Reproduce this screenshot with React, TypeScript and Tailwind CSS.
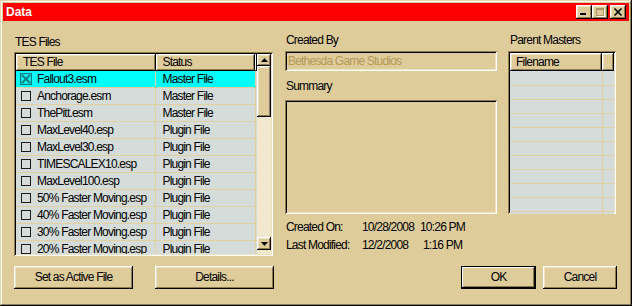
import React from 'react';

const files: { name: string; status: string; checked?: boolean }[] = [
  { name: 'Fallout3.esm', status: 'Master File', checked: true },
  { name: 'Anchorage.esm', status: 'Master File' },
  { name: 'ThePitt.esm', status: 'Master File' },
  { name: 'MaxLevel40.esp', status: 'Plugin File' },
  { name: 'MaxLevel30.esp', status: 'Plugin File' },
  { name: 'TIMESCALEX10.esp', status: 'Plugin File' },
  { name: 'MaxLevel100.esp', status: 'Plugin File' },
  { name: '50% Faster Moving.esp', status: 'Plugin File' },
  { name: '40% Faster Moving.esp', status: 'Plugin File' },
  { name: '30% Faster Moving.esp', status: 'Plugin File' },
  { name: '20% Faster Moving.esp', status: 'Plugin File' },
];

const raised =
  'shadow-[inset_-1px_-1px_0_#000,inset_1px_1px_0_#fff,inset_-2px_-2px_0_#8e7c4e,inset_2px_2px_0_#efe2c0]';
const sunken =
  'shadow-[inset_1px_1px_0_#8e7c4e,inset_-1px_-1px_0_#fff,inset_2px_2px_0_#000,inset_-2px_-2px_0_#efe2c0]';

function CheckBox({ checked }: { checked?: boolean }) {
  if (checked) {
    return (
      <svg width="12" height="12" viewBox="0 0 12 12" className="shrink-0">
        <rect x="0.5" y="0.5" width="11" height="11" fill="none" stroke="#127e7e" strokeWidth="1.5" />
        <path d="M2 2L10 10M10 2L2 10" stroke="#127e7e" strokeWidth="2" />
      </svg>
    );
  }
  return <span className="mx-[1px] block h-[10px] w-[10px] shrink-0 border border-[#1c1c1c]" />;
}

function Button({ label, wide, isDefault }: { label: string; wide: string; isDefault?: boolean }) {
  return (
    <div
      className={`${wide} flex h-[23px] items-center justify-center bg-[#dfcc9b] text-black ${
        isDefault
          ? 'border border-black shadow-[inset_-1px_-1px_0_#000,inset_1px_1px_0_#fff,inset_-2px_-2px_0_#8e7c4e]'
          : raised
      }`}
    >
      {label}
    </div>
  );
}

export default function App() {
  return (
    <div
      className="flex h-[306px] w-[632px] flex-col bg-[#dfcc9b] p-[3px] text-[12px] leading-[13px] tracking-[-0.8px] text-black shadow-[inset_-1px_-1px_0_#000,inset_1px_1px_0_#e6d6ac,inset_-2px_-2px_0_#8e7c4e,inset_2px_2px_0_#fff]"
      style={{ fontFamily: "'Liberation Sans', Arial, sans-serif" }}
    >
      {/* title bar */}
      <div className="flex h-[18px] items-center bg-[#ff0000] pr-[3px] pl-[3px]">
        <span className="text-[12px] font-bold tracking-normal text-white">Data</span>
        <div className="ml-auto flex items-center">
          <div className={`relative h-[14px] w-[16px] bg-[#dfcc9b] ${raised}`}>
            <span className="absolute top-[8px] left-[4px] h-[2px] w-[6px] bg-black" />
          </div>
          <div className={`relative h-[14px] w-[16px] bg-[#dfcc9b] ${raised}`}>
            <span className="absolute top-[3px] left-[4px] h-[8px] w-[8px] border border-t-2 border-[#a8956a] shadow-[1px_1px_0_#fff]" />
          </div>
          <div className={`relative ml-[2px] h-[14px] w-[16px] bg-[#dfcc9b] ${raised}`}>
            <svg width="16" height="14" viewBox="0 0 16 14" className="absolute top-0 left-0">
              <path d="M4.5 3.5L11.5 10.5M11.5 3.5L4.5 10.5" stroke="#000" strokeWidth="1.6" />
            </svg>
          </div>
        </div>
      </div>

      {/* body */}
      <div className="flex flex-1 flex-col pr-[12px] pl-[11px]">
        <div className="flex pt-[13px]">
          {/* TES Files */}
          <div className="flex w-[259px] flex-col pt-[2px]">
            <div className="pl-[1px]">TES Files</div>
            <div className={`mt-[3px] flex h-[204px] bg-[#dfcc9b] p-[2px] ${sunken}`}>
              <div className="w-[242px] overflow-hidden">
                <div className="flex h-[17px] bg-[#dfcc9b]">
                  <div className={`flex w-[141px] items-center pl-[7px] ${raised}`}>TES File</div>
                  <div className={`flex w-[99px] items-center pl-[6px] ${raised}`}>Status</div>
                  <div className={`w-[2px] ${raised}`} />
                </div>
                {files.map((f) => (
                  <div key={f.name} className="flex h-[17px] border-b border-[#e3d0a0]">
                    <div
                      className={`flex w-[141px] items-center border-r border-[#e3d0a0] pl-[4px] ${
                        f.checked ? 'bg-[#00ffff]' : 'bg-[#d5dcda]'
                      }`}
                    >
                      <CheckBox checked={f.checked} />
                      <span className="ml-[5px] whitespace-nowrap">{f.name}</span>
                    </div>
                    <div
                      className={`flex w-[99px] items-center pl-[6px] ${f.checked ? 'bg-[#00ffff]' : 'bg-[#d5dcda]'}`}
                    >
                      {f.status}
                    </div>
                    <div className="w-[2px] border-l border-[#e3d0a0] bg-[#d5dcda]" />
                  </div>
                ))}
              </div>
              <div className="flex w-[14px] flex-col bg-[#f2e8cf] pb-[4px]">
                <div className={`flex h-[12px] items-center justify-center bg-[#dfcc9b] ${raised}`}>
                  <svg width="7" height="4" viewBox="0 0 7 4">
                    <path d="M3.5 0L7 4H0Z" fill="#000" />
                  </svg>
                </div>
                <div className={`h-[51px] bg-[#dfcc9b] ${raised}`} />
                <div className="flex-1" />
                <div className={`flex h-[13px] items-center justify-center bg-[#dfcc9b] ${raised}`}>
                  <svg width="7" height="4" viewBox="0 0 7 4">
                    <path d="M0 0H7L3.5 4Z" fill="#000" />
                  </svg>
                </div>
              </div>
            </div>
          </div>

          {/* middle column */}
          <div className="ml-[12px] flex w-[212px] flex-col">
            <div className="pl-[1px]">Created By</div>
            <div className={`mt-[4px] flex h-[20px] items-center pl-[3px] text-[#b39858] ${sunken}`}>
              Bethesda Game Studios
            </div>
            <div className="mt-[9px] pl-[1px]">Summary</div>
            <div className={`mt-[7px] h-[114px] ${sunken}`} />
            <div className="mt-[7px] flex pl-[1px] whitespace-nowrap">
              <span className="w-[76px]">Created On:</span>
              <span className="w-[58px]">10/28/2008</span>
              <span>10:26 PM</span>
            </div>
            <div className="mt-[5px] flex pl-[1px] whitespace-nowrap">
              <span className="w-[76px]">Last Modified:</span>
              <span className="w-[58px]">12/2/2008</span>
              <span className="ml-[3px]">1:16 PM</span>
            </div>
          </div>

          {/* parent masters */}
          <div className="ml-[11px] flex w-[108px] flex-col">
            <div className="pl-[2px]">Parent Masters</div>
            <div className={`mt-[4px] h-[163px] overflow-hidden p-[2px] ${sunken}`}>
              <div className="flex h-[18px] bg-[#dfcc9b]">
                <div className={`flex w-[92px] items-center pl-[6px] ${raised}`}>Filename</div>
                <div className={`flex-1 ${raised}`} />
              </div>
              {Array.from({ length: 11 }).map((_, i) => (
                <div key={i} className={`flex border-b border-[#e3d0a0] ${i === 0 ? 'h-[15px]' : 'h-[14px]'}`}>
                  <div className="w-[93px] border-r border-[#e3d0a0] bg-[#d5dcda]" />
                  <div className="flex-1 bg-[#d5dcda]" />
                </div>
              ))}
            </div>
          </div>
        </div>

        {/* buttons */}
        <div className="mt-[10px] flex">
          <Button label="Set as Active File" wide="w-[119px]" />
          <div className="ml-[22px]">
            <Button label="Details..." wide="w-[119px]" />
          </div>
          <div className="ml-auto">
            <Button label="OK" wide="w-[75px]" isDefault />
          </div>
          <div className="ml-[7px]">
            <Button label="Cancel" wide="w-[74px]" />
          </div>
        </div>
      </div>
    </div>
  );
}
